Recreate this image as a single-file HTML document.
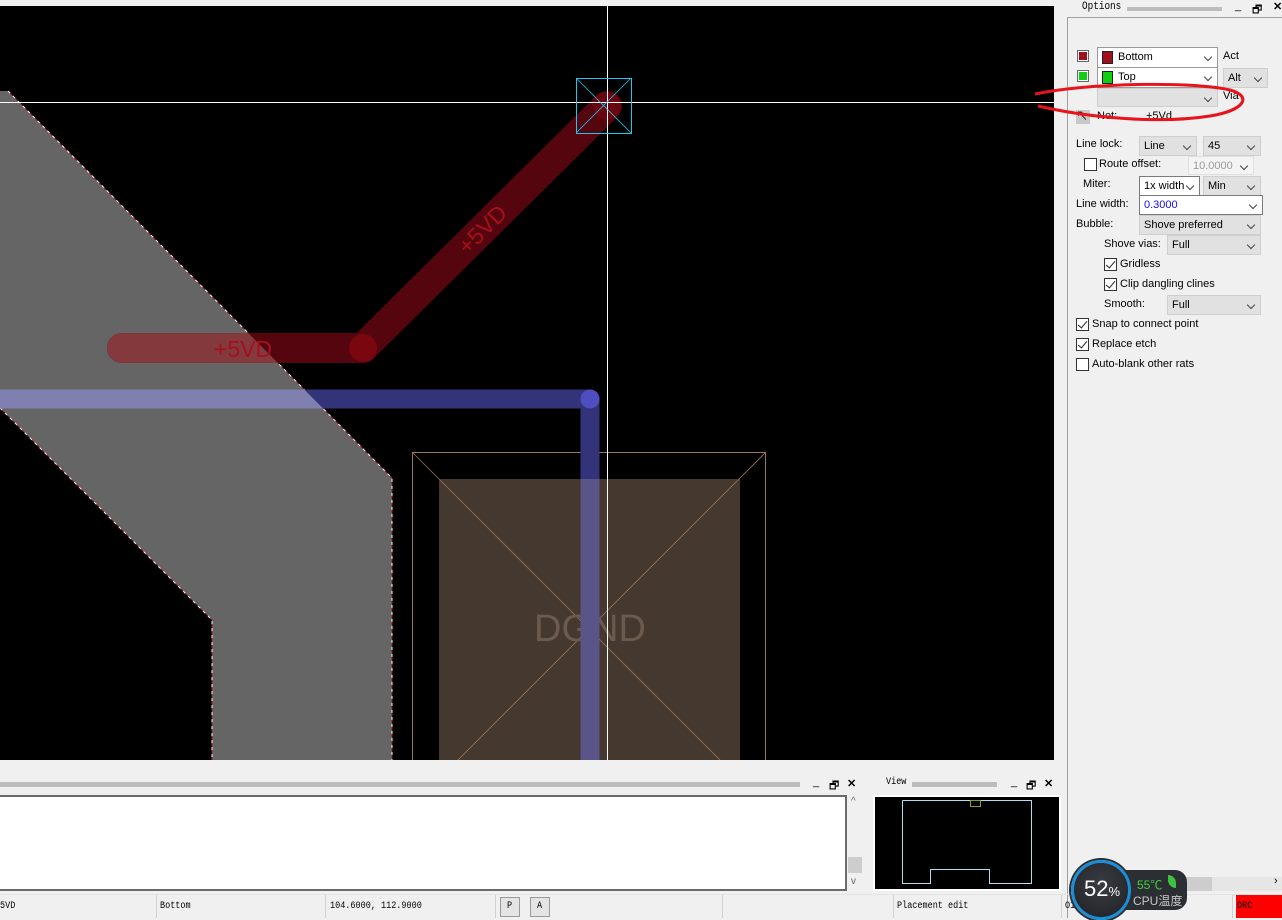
<!DOCTYPE html>
<html><head><meta charset="utf-8"><style>
*{margin:0;padding:0;box-sizing:border-box}
body{width:1282px;height:918px;overflow:hidden;background:#f0f0f0;position:relative;font-family:"Liberation Sans","Noto Sans CJK SC",sans-serif;font-size:11px;color:#000}
.a{position:absolute;white-space:nowrap}
.mono{font-family:"Liberation Mono","Noto Sans CJK SC",monospace;font-size:10px;transform:scaleX(.85);transform-origin:left}
.cb{position:absolute;height:20px;background:#e1e1e1;border:1px solid #cfcfcf;font-size:11px;line-height:18px;padding-left:4px}
.cb::after{content:"";position:absolute;right:6px;top:6px;width:5px;height:5px;border-right:1px solid #444;border-bottom:1px solid #444;transform:rotate(45deg)}
.w{background:#fff;border:1px solid #7a7a7a}
.ck{position:absolute;width:13px;height:13px;border:1px solid #333;background:#fff}
.ck.on::after{content:"";position:absolute;left:3px;top:0px;width:4px;height:8px;border-right:1.5px solid #222;border-bottom:1.5px solid #222;transform:rotate(40deg)}
.ic{position:absolute;font-size:11px;font-weight:bold}
.sep{position:absolute;top:895px;width:1px;height:23px;background:#d0d0d0}
</style></head><body>

<svg class="a" style="left:0;top:0" width="1054" height="760" viewBox="0 0 1054 760">
<defs><clipPath id="g"><polygon points="0,91 8,91 392,478 392,760 212,760 212,620 0,408"/></clipPath>
<clipPath id="p"><rect x="439" y="479" width="301" height="281"/></clipPath></defs>
<rect x="0" y="6" width="1054" height="754" fill="#000"/>
<polygon points="0,91 8,91 392,478 392,760 212,760 212,620 0,408" fill="#656565"/>
<polyline points="8,91 392,478 392,760" fill="none" stroke="#fff" stroke-width="1" stroke-dasharray="4 3"/>
<polyline points="8,91 392,478 392,760" fill="none" stroke="#b01020" stroke-width="1" stroke-dasharray="3 4" stroke-dashoffset="4"/>
<polyline points="0,408 212,620 212,760" fill="none" stroke="#fff" stroke-width="1" stroke-dasharray="4 3"/>
<polyline points="0,408 212,620 212,760" fill="none" stroke="#b01020" stroke-width="1" stroke-dasharray="3 4" stroke-dashoffset="4"/>
<!-- pad -->
<rect x="439" y="479" width="301" height="290" fill="#45382f"/>
<rect x="412.5" y="452.5" width="353" height="320" fill="none" stroke="#9a7458"/>
<line x1="412" y1="452" x2="766" y2="806" stroke="#9a7458" stroke-width=".8"/>
<line x1="766" y1="452" x2="412" y2="806" stroke="#9a7458" stroke-width=".8"/>
<text x="590" y="641" font-family="Liberation Sans" font-size="38" fill="#6b5a4e" text-anchor="middle">DGND</text>
<!-- red trace -->
<g stroke="#55050d" stroke-width="30" stroke-linecap="round" fill="none">
<line x1="122" y1="348" x2="363" y2="348"/><line x1="363" y1="348" x2="607" y2="106"/></g>
<g clip-path="url(#g)" stroke="#84393c" stroke-width="30" stroke-linecap="round" fill="none">
<line x1="122" y1="348" x2="363" y2="348"/></g>
<circle cx="363" cy="348" r="14" fill="#7a0610"/>
<circle cx="607" cy="106" r="14" fill="#6a0510"/>
<text x="243" y="357" font-family="Liberation Sans" font-size="23" fill="#a5101e" text-anchor="middle">+5VD</text>
<text transform="translate(488,235) rotate(-45)" font-family="Liberation Sans" font-size="23" fill="#a5101e" text-anchor="middle">+5VD</text>
<!-- blue trace -->
<g stroke="#33337a" stroke-width="19" stroke-linecap="round" fill="none">
<line x1="-10" y1="399" x2="590" y2="399"/><line x1="590" y1="399" x2="590" y2="770"/></g>
<g clip-path="url(#g)"><line x1="-10" y1="399" x2="590" y2="399" stroke="#8080b0" stroke-width="19"/></g>
<g clip-path="url(#p)"><line x1="590" y1="399" x2="590" y2="770" stroke="#5a5488" stroke-width="19"/></g>
<circle cx="590" cy="399" r="9.5" fill="#4e4ec0"/>
<!-- crosshair -->
<line x1="607.5" y1="6" x2="607.5" y2="760" stroke="#fff"/>
<line x1="0" y1="102.5" x2="1054" y2="102.5" stroke="#fff"/>
<rect x="576.5" y="78.5" width="55" height="55" fill="none" stroke="#1ec8f0"/>
<line x1="576" y1="78" x2="631" y2="133" stroke="#1ec8f0" stroke-width=".8"/>
<line x1="631" y1="78" x2="576" y2="133" stroke="#1ec8f0" stroke-width=".8"/>
</svg>

<!-- right panel -->
<div class="a mono" style="left:1082px;top:1px;font-size:11px">Options</div>
<div class="a" style="left:1127px;top:7px;width:95px;height:4px;background:#bcbcbc"></div>
<div class="a" style="left:1235px;top:0;font-size:11px">_</div>
<div class="a" style="left:1252px;top:1px;font-size:11px">🗗</div>
<div class="ic" style="left:1273px;top:0px">✕</div>
<div class="a" style="left:1067px;top:17px;width:1px;height:901px;background:#a0a0a0"></div>
<div class="a" style="left:1067px;top:17px;width:215px;height:1px;background:#a0a0a0"></div>

<div class="a" style="left:1077px;top:50px;width:12px;height:12px;border:1px solid #666;background:#fff;padding:1px"><div style="width:8px;height:8px;background:#a0101c"></div></div>
<div class="a" style="left:1077px;top:70px;width:12px;height:12px;border:1px solid #666;background:#fff;padding:1px"><div style="width:8px;height:8px;background:#10d010"></div></div>
<div class="cb w" style="left:1097px;top:47px;width:121px;height:21px;padding-left:20px;border-color:#999">Bottom</div>
<div class="a" style="left:1102px;top:51px;width:11px;height:13px;background:#a0101c;border:1px solid #222"></div>
<div class="cb w" style="left:1097px;top:67px;width:121px;height:21px;padding-left:20px;border-color:#999">Top</div>
<div class="a" style="left:1102px;top:71px;width:11px;height:13px;background:#10d010;border:1px solid #222"></div>
<div class="cb" style="left:1097px;top:88px;width:121px;height:19px"></div>
<div class="a" style="left:1223px;top:50px">Act</div>
<div class="cb" style="left:1223px;top:68px;width:45px">Alt</div>
<div class="a" style="left:1223px;top:90px">Via</div>
<div class="a" style="left:1076px;top:110px;width:14px;height:14px;background:#c8c8c8;font-size:12px;line-height:12px">↖</div>
<div class="a" style="left:1097px;top:110px">Net:</div>
<div class="a" style="left:1146px;top:110px">+5Vd</div>
<svg class="a" style="left:1030px;top:80px" width="220" height="50"><path d="M5 14 C60 3,160 1,200 10 C222 16,216 30,180 36 C130 44,60 38,8 26" fill="none" stroke="#e8141c" stroke-width="3"/></svg>

<div class="a" style="left:1076px;top:138px">Line lock:</div>
<div class="cb" style="left:1139px;top:136px;width:58px">Line</div>
<div class="cb" style="left:1203px;top:136px;width:58px">45</div>
<div class="ck" style="left:1084px;top:158px"></div>
<div class="a" style="left:1099px;top:158px">Route offset:</div>
<div class="cb" style="left:1188px;top:156px;width:66px;height:19px;background:#f4f4f4;color:#999;border-color:#e0e0e0">10.0000</div>
<div class="a" style="left:1083px;top:178px">Miter:</div>
<div class="cb w" style="left:1139px;top:176px;width:61px">1x width</div>
<div class="cb" style="left:1203px;top:176px;width:58px">Min</div>
<div class="a" style="left:1076px;top:198px">Line width:</div>
<div class="cb w" style="left:1139px;top:195px;width:124px;color:#1010e0">0.3000</div>
<div class="a" style="left:1076px;top:218px">Bubble:</div>
<div class="cb" style="left:1139px;top:215px;width:122px">Shove preferred</div>
<div class="a" style="left:1104px;top:238px">Shove vias:</div>
<div class="cb" style="left:1167px;top:235px;width:94px">Full</div>
<div class="ck on" style="left:1104px;top:258px"></div><div class="a" style="left:1120px;top:258px">Gridless</div>
<div class="ck on" style="left:1104px;top:278px"></div><div class="a" style="left:1120px;top:278px">Clip dangling clines</div>
<div class="a" style="left:1104px;top:298px">Smooth:</div>
<div class="cb" style="left:1167px;top:295px;width:94px">Full</div>
<div class="ck on" style="left:1076px;top:318px"></div><div class="a" style="left:1092px;top:318px">Snap to connect point</div>
<div class="ck on" style="left:1076px;top:338px"></div><div class="a" style="left:1092px;top:338px">Replace etch</div>
<div class="ck" style="left:1076px;top:358px"></div><div class="a" style="left:1092px;top:358px">Auto-blank other rats</div>

<!-- bottom command window -->
<div class="a" style="left:0;top:782px;width:800px;height:5px;background:#bcbcbc"></div>
<div class="a" style="left:813px;top:776px">_</div><div class="a" style="left:829px;top:777px">🗗</div><div class="ic" style="left:847px;top:777px">✕</div>
<div class="a" style="left:0;top:795px;width:847px;height:96px;background:#fff;border:2px solid #6a6a6a;border-left:none"></div>
<div class="a" style="left:851px;top:796px;font-size:10px;color:#666">^</div>
<div class="a" style="left:848px;top:857px;width:14px;height:16px;background:#cdcdcd"></div>
<div class="a" style="left:851px;top:876px;font-size:10px;color:#666">v</div>

<div class="a mono" style="left:886px;top:777px">View</div>
<div class="a" style="left:912px;top:782px;width:85px;height:5px;background:#bcbcbc"></div>
<div class="a" style="left:1011px;top:776px">_</div><div class="a" style="left:1026px;top:777px">🗗</div><div class="ic" style="left:1044px;top:777px">✕</div>
<svg class="a" style="left:873px;top:795px" width="188" height="96"><rect x="0" y="0" width="188" height="96" fill="#fff"/><rect x="2" y="2" width="184" height="92" fill="#000"/>
<polyline points="29.5,5.5 158.5,5.5 158.5,88.5 116.5,88.5 116.5,74.5 57.5,74.5 57.5,88.5 29.5,88.5 29.5,5.5" fill="none" stroke="#b0e0f0"/>
<rect x="97.5" y="5.5" width="10" height="6" fill="none" stroke="#8aa020"/></svg>

<div class="a" style="left:1180px;top:877px;width:102px;height:14px;background:#e6e6e6"></div>
<div class="a" style="left:1186px;top:877px;width:26px;height:14px;background:#cdcdcd"></div>
<div class="a" style="left:1274px;top:875px;font-size:11px">›</div>

<!-- status bar -->
<div class="a" style="left:0;top:894px;width:1282px;height:1px;background:#e4e4e4"></div>
<div class="sep" style="left:156px"></div><div class="sep" style="left:325px"></div><div class="sep" style="left:495px"></div>
<div class="sep" style="left:722px"></div><div class="sep" style="left:893px"></div><div class="sep" style="left:1061px"></div><div class="sep" style="left:1232px"></div>
<div class="a mono" style="left:0;top:901px">5VD</div>
<div class="a mono" style="left:160px;top:901px">Bottom</div>
<div class="a mono" style="left:330px;top:901px">104.6000, 112.9000</div>
<div class="a" style="left:500px;top:897px;width:20px;height:20px;border:1px solid #999;background:#e4e4e4"></div><div class="a mono" style="left:507px;top:901px">P</div>
<div class="a" style="left:530px;top:897px;width:20px;height:20px;border:1px solid #999;background:#e4e4e4"></div><div class="a mono" style="left:537px;top:901px">A</div>
<div class="a mono" style="left:897px;top:901px">Placement edit</div>
<div class="a mono" style="left:1065px;top:901px">O1</div>
<div class="a" style="left:1236px;top:895px;width:46px;height:23px;background:#ff0000"></div>
<div class="a mono" style="left:1237px;top:901px">DRC</div>

<!-- CPU widget -->
<div class="a" style="left:1098px;top:870px;width:89px;height:40px;border-radius:12px;background:#2b2e33"></div>
<div class="a" style="left:1071px;top:860px;width:60px;height:60px;border-radius:50%;background:radial-gradient(circle at 50% 40%,#3a3d42,#1e2024);border:3px solid #1a8fd8;box-shadow:0 0 0 2px #2b2e33"></div>
<div class="a" style="left:1084px;top:876px;color:#fff;font-size:22px">52<span style="font-size:13px">%</span></div>
<div class="a" style="left:1137px;top:876px;color:#40d040;font-size:12px">55℃</div>
<div class="a" style="left:1168px;top:875px;width:8px;height:13px;background:#40c040;border-radius:0 8px 0 8px"></div>
<div class="a" style="left:1133px;top:892px;color:#c8c8c8;font-size:12px">CPU温度</div>
</body></html>
